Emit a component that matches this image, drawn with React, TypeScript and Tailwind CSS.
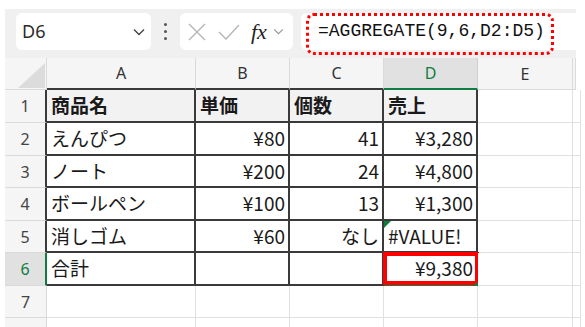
const COLS = ["A", "B", "C", "D", "E", ""];
const ROW_H = [33, 33, 32, 33, 32, 33, 32, 10];

type Cell = { text: string; right?: boolean; bold?: boolean };

const DATA: Cell[][] = [
  [{ text: "商品名", bold: true }, { text: "単価", bold: true }, { text: "個数", bold: true }, { text: "売上", bold: true }],
  [{ text: "えんぴつ" }, { text: "¥80", right: true }, { text: "41", right: true }, { text: "¥3,280", right: true }],
  [{ text: "ノート" }, { text: "¥200", right: true }, { text: "24", right: true }, { text: "¥4,800", right: true }],
  [{ text: "ボールペン" }, { text: "¥100", right: true }, { text: "13", right: true }, { text: "¥1,300", right: true }],
  [{ text: "消しゴム" }, { text: "¥60", right: true }, { text: "なし", right: true }, { text: "#VALUE!" }],
  [{ text: "合計" }, { text: "" }, { text: "" }, { text: "¥9,380", right: true }],
];

const UI = { fontFamily: '"Noto Sans", "Liberation Sans", sans-serif' };
const JP = { fontFamily: '"Noto Sans CJK JP", "Noto Sans", sans-serif' };

function Chevron({ className }: { className: string }) {
  return (
    <svg viewBox="0 0 12 8" className={className} fill="none" stroke="currentColor" strokeWidth="1.4">
      <path d="M1 1.5 L6 6.5 L11 1.5" />
    </svg>
  );
}

function Toolbar() {
  return (
    <div className="flex h-[49px] items-start bg-[#f0f0f0] pl-[11px] pt-[4px]">
      <div className="flex h-[37px] w-[135px] items-center justify-between rounded-md bg-white pl-[6px] pr-[6px]">
        <span className="text-[18px] text-[#2b2b2b]" style={UI}>
          D6
        </span>
        <Chevron className="h-[8px] w-[12px] text-[#444]" />
      </div>
      <div className="flex h-[37px] w-[29px] flex-col items-center justify-center gap-[4px]">
        <span className="h-[3px] w-[3px] rounded-full bg-[#555]" />
        <span className="h-[3px] w-[3px] rounded-full bg-[#555]" />
        <span className="h-[3px] w-[3px] rounded-full bg-[#555]" />
      </div>
      <div className="flex h-[37px] w-[113px] items-center rounded-md bg-white pl-[8px]">
        <svg viewBox="0 0 18 18" className="h-[18px] w-[18px]" fill="none" stroke="#b3b3b3" strokeWidth="1.3">
          <path d="M1 1 L17 17 M17 1 L1 17" />
        </svg>
        <svg viewBox="0 0 22 16" className="ml-[12px] h-[16px] w-[22px]" fill="none" stroke="#b3b3b3" strokeWidth="1.3">
          <path d="M1 8 L8 15 L21 1" />
        </svg>
        <span className="ml-[11px] text-[22px] italic leading-none text-[#222]" style={{ fontFamily: '"Liberation Serif", serif' }}>
          fx
        </span>
        <Chevron className="ml-[6px] h-[7px] w-[11px] text-[#999]" />
      </div>
      <div className="relative ml-[8px] flex h-[37px] flex-1 items-center rounded-l-md bg-white pl-[17px]">
        <span className="text-[18px] text-[#111]" style={{ fontFamily: '"Liberation Mono", monospace' }}>
          =AGGREGATE(9,6,D2:D5)
        </span>
        <div className="absolute left-[5px] top-0 h-[42px] w-[248px] rounded-lg border-[3px] border-dotted border-[#ff0000]" />
      </div>
    </div>
  );
}

function Sheet() {
  const dark = "border-[#3a3a3a]";
  const cells: React.ReactNode[] = [];

  // header row
  cells.push(
    <div key="corner" className="relative h-[32px] border-b border-r border-[#dadada] bg-[#f5f5f5]">
      <svg viewBox="0 0 27 25" className="absolute left-[13px] top-[5px] h-[25px] w-[27px]">
        <polygon points="0,25 27,25 27,0" fill="#dcdcdc" />
      </svg>
    </div>
  );
  COLS.forEach((c, i) => {
    const sel = c === "D";
    const inTable = i < 4;
    cells.push(
      <div
        key={"h" + c + i}
        className={`flex h-[32px] items-center justify-center border-r text-[16px] ${
          sel
            ? "border-b-2 border-r-[#d0d0d0] border-b-[#107c41] bg-[#e1e1e1] text-[#107c41]"
            : inTable
              ? "border-b-2 border-r-[#dadada] border-b-[#3a3a3a] bg-[#f5f5f5] text-[#333]"
              : "border-b border-[#dadada] bg-[#f5f5f5] text-[#333]"
        }`}
        style={UI}
      >
        {c}
      </div>
    );
  });

  ROW_H.forEach((h, r) => {
    const rowNo = r + 1;
    const inRows = r < 6;
    const selRow = rowNo === 6;
    cells.push(
      <div
        key={"r" + r}
        style={{ ...UI, height: h }}
        className={`flex items-center justify-center border-b border-b-[#dadada] text-[16px] ${
          selRow
            ? "border-r-2 border-r-[#107c41] bg-[#e1e1e1] text-[#107c41]"
            : inRows
              ? "border-r-2 border-r-[#3a3a3a] bg-[#f5f5f5] text-[#444]"
              : "border-r border-r-[#dadada] bg-[#f5f5f5] text-[#444]"
        }`}
      >
        {r < 7 ? rowNo : ""}
      </div>
    );
    COLS.forEach((_, c) => {
      const inTable = inRows && c < 4;
      const cell = inTable ? DATA[r][c] : undefined;
      const isD5 = r === 4 && c === 3;
      const isD6 = r === 5 && c === 3;
      cells.push(
        <div
          key={`c${r}-${c}`}
          style={{ ...JP, height: h }}
          className={`relative flex items-center px-[3px] text-[19px] text-[#1a1a1a] ${
            inTable ? `border-b-2 border-r-2 ${dark}` : "border-b border-r border-[#e1e1e1]"
          } ${r === 0 && inTable ? "bg-[#f2f2f2]" : "bg-white"} ${cell?.right ? "justify-end" : "justify-start pl-[4px]"} ${
            cell?.bold ? "font-bold" : ""
          } ${isD6 ? "border-b-[#107c41]" : ""}`}
        >
          {cell?.text}
          {isD5 && (
            <svg viewBox="0 0 7 7" className="absolute left-0 top-0 h-[7px] w-[7px]">
              <polygon points="0,0 7,0 0,7" fill="#107c41" />
            </svg>
          )}
          {isD6 && (
            <>
              <div className="absolute left-[-1px] top-[-1px] h-[33px] w-[96px] border-[4px] border-[#ff0000]" />
              <div className="absolute bottom-[-4px] right-[-4px] h-[5px] w-[5px] bg-[#107c41]" />
            </>
          )}
        </div>
      );
    });
  });

  return <div className="grid grid-cols-[42px_149px_94px_94px_94px_95px_3px]">{cells}</div>;
}

export default function App() {
  return (
    <div className="h-[327px] w-[585px] overflow-hidden bg-white pl-[5px] pt-[9px]">
      <div className="w-[571px]">
        <Toolbar />
        <Sheet />
      </div>
    </div>
  );
}
